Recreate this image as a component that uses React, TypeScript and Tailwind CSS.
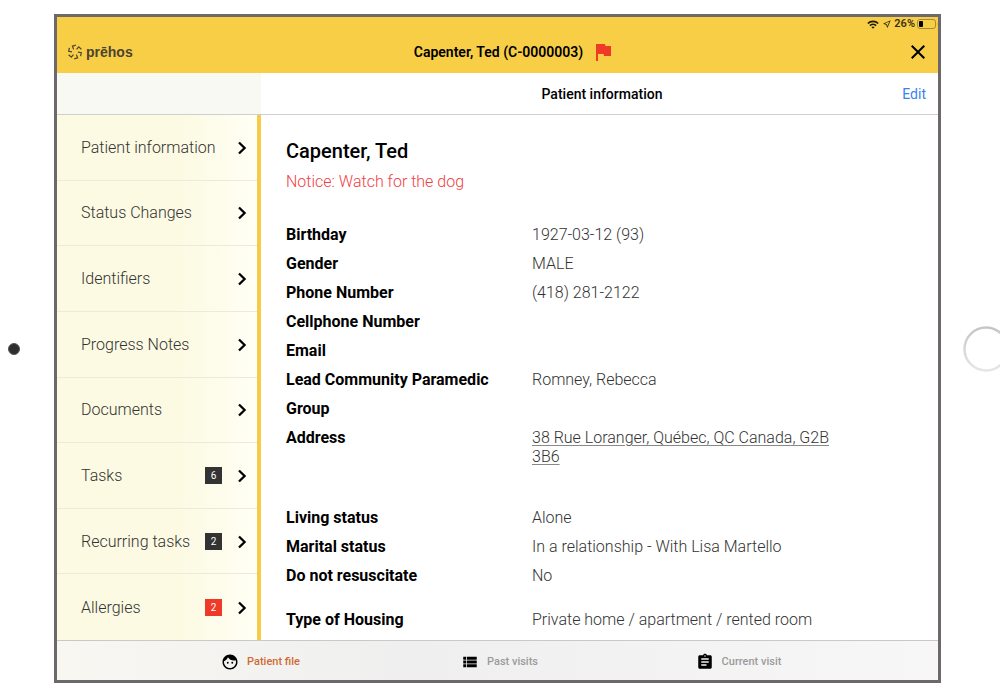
import { MdAssignment, MdClose, MdFace, MdFlag, MdOutlineNearMe, MdViewList } from "react-icons/md";

type MenuItem = { label: string; count?: number; alert?: boolean };
type Detail = { label: string; value?: string };

const menu: MenuItem[] = [
  { label: "Patient information" },
  { label: "Status Changes" },
  { label: "Identifiers" },
  { label: "Progress Notes" },
  { label: "Documents" },
  { label: "Tasks", count: 6 },
  { label: "Recurring tasks", count: 2 },
  { label: "Allergies", count: 2, alert: true },
];

const identity: Detail[] = [
  { label: "Birthday", value: "1927-03-12 (93)" },
  { label: "Gender", value: "MALE" },
  { label: "Phone Number", value: "(418) 281-2122" },
  { label: "Cellphone Number" },
  { label: "Email" },
  { label: "Lead Community Paramedic", value: "Romney, Rebecca" },
  { label: "Group" },
];

const status: Detail[] = [
  { label: "Living status", value: "Alone" },
  { label: "Marital status", value: "In a relationship - With Lisa Martello" },
  { label: "Do not resuscitate", value: "No" },
];

function Row({ label, value }: Detail) {
  return (
    <div className="grid grid-cols-[246px_1fr] py-[5px] leading-[19px]">
      <dt className="font-bold text-black">{label}</dt>
      <dd className="font-light text-[#333]">{value}</dd>
    </div>
  );
}

function Logo() {
  return (
    <div className="flex items-center gap-[3px] text-[#4b4432]">
      <svg viewBox="0 0 16 16" className="size-4" fill="none" stroke="currentColor" strokeWidth="1.2" aria-hidden="true">
        {[0, 60, 120, 180, 240, 300].map((angle) => (
          <path key={angle} d="M6.6 5.4 L5.4 2.2 L8.8 1.1" transform={`rotate(${angle} 8 8)`} />
        ))}
      </svg>
      <span className="font-['Liberation_Sans',sans-serif] text-[14px] font-bold leading-5">prēhos</span>
    </div>
  );
}

function StatusIcons() {
  return (
    <div className="flex h-[14px] items-center justify-end text-[11px] font-semibold leading-3 text-[#3b3215]">
      <svg viewBox="0 0 12 9" className="mr-[3px] h-[9px] w-3" fill="none" stroke="#1d1909" strokeWidth="1.7" aria-label="Wi-Fi">
        <path d="M0.8 3.5 A7.4 7.4 0 0 1 11.2 3.5" />
        <path d="M2.9 5.6 A4.4 4.4 0 0 1 9.1 5.6" />
        <path d="M6 8.8 L4.4 7.1 Q6 5.9 7.6 7.1 Z" fill="#1d1909" stroke="none" />
      </svg>
      <MdOutlineNearMe className="mr-[2px] size-[10px]" aria-hidden="true" />
      <span className="mr-[2px]">26%</span>
      <svg viewBox="0 0 21 10" className="h-[10px] w-[21px]" aria-label="Battery">
        <rect x="0.5" y="0.5" width="18" height="9" rx="2.4" fill="none" stroke="#a58a38" />
        <rect x="2" y="2" width="4" height="6" rx="1" fill="#000" />
        <path d="M20 3.4 Q21 5 20 6.6 Z" fill="#a58a38" />
      </svg>
    </div>
  );
}

export default function App() {
  return (
    <div className="flex min-h-screen overflow-hidden bg-white pb-[15px] pt-[14px] font-[Roboto,sans-serif] text-[16px] text-black">
      <div className="flex w-[54px] shrink-0 items-center pl-2">
        <span className="size-3 rounded-full border border-[#555] bg-[#302d2d]" />
      </div>

      <div className="flex min-w-0 flex-1 flex-col border-[3px] border-[#6c686b]">
        <header className="h-14 bg-[#f8ce46]">
          <StatusIcons />
          <div className="grid grid-cols-[1fr_auto_1fr] items-center pl-[10px] pr-2 pt-[9px]">
            <Logo />
            <h1 className="text-[14px] font-semibold leading-5">Capenter, Ted (C-0000003)</h1>
            <div className="flex h-6 items-center justify-between pl-2">
              <MdFlag className="size-6 text-[#ee3a26]" aria-label="Flagged" />
              <button type="button" aria-label="Close">
                <MdClose className="size-6" />
              </button>
            </div>
          </div>
        </header>

        <div className="flex h-[42px] border-b border-[#cfcfcf]">
          <div className="w-[204px] shrink-0 bg-[#f9f9f4]" />
          <div className="grid flex-1 grid-cols-[1fr_auto_1fr] items-center pl-[17px] pr-3 pt-px">
            <h2 className="col-start-2 text-[14px] font-medium">Patient information</h2>
            <button type="button" className="justify-self-end text-[14px] text-[#3b82f0]">Edit</button>
          </div>
        </div>

        <div className="flex flex-1">
          <nav className="grid w-[204px] shrink-0 auto-rows-fr border-r-4 border-[#f6cb48] bg-linear-to-r from-[#fcfae2] from-60% to-[#fffff5]">
            {menu.map((item) => (
              <a
                key={item.label}
                href="#"
                className="flex items-center border-b border-[#edebd7] pl-6 pr-[10px] pt-px font-light text-[#333] last:border-b-0"
              >
                <span className="flex-1 whitespace-nowrap">{item.label}</span>
                {item.count !== undefined && (
                  <span
                    className={`mr-[15px] flex size-[17px] items-center justify-center text-[10px] font-normal text-white ${
                      item.alert ? "bg-[#ee3a26]" : "bg-[#333]"
                    }`}
                  >
                    {item.count}
                  </span>
                )}
                <svg viewBox="0 0 10 14" className="h-[14px] w-[10px]" fill="none" stroke="#000" strokeWidth="2.3" aria-hidden="true">
                  <path d="M2 1.5 L7.6 7 L2 12.5" />
                </svg>
              </a>
            ))}
          </nav>

          <main className="flex-1 px-[25px] pt-6">
            <h3 className="text-[20px] font-medium leading-6">Capenter, Ted</h3>
            <p className="mt-[9px] font-light leading-5 text-[#f2403f]">Notice: Watch for the dog</p>
            <dl className="mt-7">
              {identity.map((d) => (
                <Row key={d.label} {...d} />
              ))}
              <div className="grid grid-cols-[246px_1fr] pb-7 pt-[5px] leading-[19px]">
                <dt className="font-bold">Address</dt>
                <dd className="max-w-[320px] font-light text-[#333]">
                  <a href="#" className="underline decoration-[#888] decoration-1 underline-offset-2">
                    38 Rue Loranger, Québec, QC Canada, G2B 3B6
                  </a>
                </dd>
              </div>
              <div className="pb-[15px] pt-[9px]">
                {status.map((d) => (
                  <Row key={d.label} {...d} />
                ))}
              </div>
              <Row label="Type of Housing" value="Private home / apartment / rented room" />
            </dl>
          </main>
        </div>

        <footer className="grid h-10 grid-cols-3 border-t border-[#c9c9c9] bg-linear-to-r from-[#f8f7f2] via-[#efefef] via-40% to-[#f7f7f7] pl-[84px] pr-20 pt-[3px] text-[11px] font-medium text-[#9b9b9b]">
          <button type="button" className="flex items-center justify-center gap-2 text-[#cf6a35]">
            <MdFace className="size-[18px] text-black" aria-hidden="true" />
            Patient file
          </button>
          <button type="button" className="flex items-center justify-center gap-2">
            <MdViewList className="size-[18px] text-black" aria-hidden="true" />
            Past visits
          </button>
          <button type="button" className="flex items-center justify-center gap-2">
            <MdAssignment className="size-[18px] text-black" aria-hidden="true" />
            Current visit
          </button>
        </footer>
      </div>

      <div className="flex w-[59px] shrink-0 items-center overflow-hidden pl-[22px]">
        <svg viewBox="0 0 46 46" className="size-[46px] shrink-0" aria-hidden="true">
          <defs>
            <linearGradient id="ring" x1="0" y1="0" x2="0" y2="1">
              <stop offset="0" stopColor="#c6c6c6" />
              <stop offset="1" stopColor="#e6e6e6" />
            </linearGradient>
          </defs>
          <circle cx="23" cy="23" r="21.5" fill="none" stroke="url(#ring)" strokeWidth="2.4" />
        </svg>
      </div>
    </div>
  );
}
